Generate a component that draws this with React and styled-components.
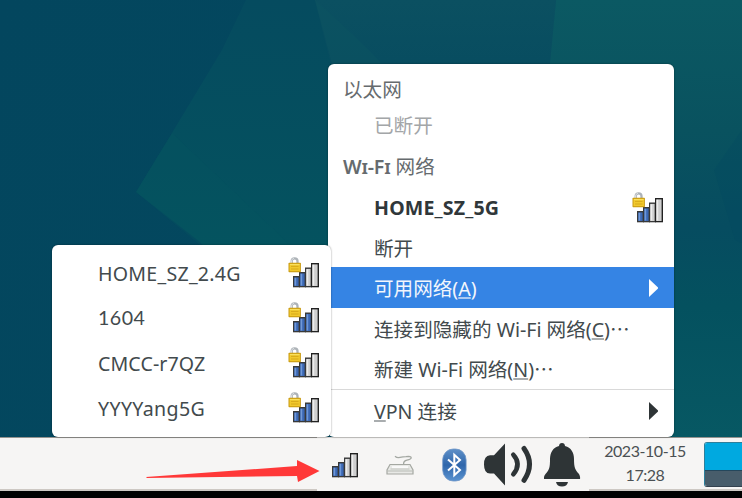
import React from 'react';
import styled, { createGlobalStyle } from 'styled-components';

const Global = createGlobalStyle`
  * { box-sizing: border-box; }
  body { margin: 0; overflow: hidden; }
  svg { display: block; flex: none; }
`;

const Desktop = styled.div`
  position: relative;
  display: flex;
  flex-direction: column;
  width: 742px;
  height: 498px;
  background: #000;
  overflow: hidden;
  font-family: 'Noto Sans', 'Noto Sans CJK SC', sans-serif;
  font-size: 19.6px;
  color: #3d4649;
`;

const Wallpaper = styled.svg`
  width: 742px;
  height: 437px;
`;

const Menu = styled.div`
  position: absolute;
  left: 328px;
  top: 64px;
  width: 346px;
  height: 373px;
  padding-top: 8px;
  background: #fff;
  border-radius: 6px;
  box-shadow: 0 0 2px rgba(0, 0, 0, 0.45);
`;

const Submenu = styled(Menu)`
  left: 52px;
  top: 245px;
  width: 279px;
  height: 192px;
  padding: 5px 1px 0 0;
`;

const Row = styled.div`
  display: flex;
  align-items: center;
  justify-content: space-between;
  height: ${(p) => p.$h}px;
  padding: 0 11px 0 ${(p) => (p.$header ? 15 : 46)}px;
  line-height: 26px;
  white-space: pre;
  font-weight: ${(p) => (p.$bold ? 700 : 400)};
  font-variant-caps: ${(p) => (p.$header ? 'small-caps' : 'normal')};
  color: ${(p) => (p.$active ? '#f2f6fc' : p.$muted ? '#a3a6a8' : p.$header ? '#666b6e' : p.$bold ? '#30373a' : '#424a4d')};
  background: ${(p) => (p.$active ? '#3584e4' : 'transparent')};
`;

const Label = styled.span`
  position: relative;
  top: ${(p) => p.$dy || 0}px;
  letter-spacing: ${(p) => p.$ls || 0}px;
  font-family: ${(p) => p.$font || 'inherit'};
  font-weight: ${(p) => p.$weight || 'inherit'};
`;

const Key = styled.span`
  text-decoration: underline;
  text-decoration-thickness: 2px;
  text-decoration-color: ${(p) => (p.$light ? '#a9c9f3' : '#a9adaf')};
  text-underline-offset: 1px;
  text-decoration-skip-ink: none;
`;

const Separator = styled.div`
  height: 1px;
  background: #d9d9d9;
`;

const ArrowSlot = styled.span`
  display: flex;
  margin-right: 4px;
`;

const Panel = styled.div`
  display: flex;
  height: 54px;
  background: #f6f5f4;
`;

const PanelSection = styled.div`
  width: ${(p) => p.$w}px;
  border-top: 1px solid #94938f;
  border-bottom: 2px solid #cdc8c3;
`;

const Tray = styled.div`
  display: flex;
  align-items: center;
  width: 272px;
  border-top: 1px solid #d4d3d1;
  padding-left: 15px;
`;

const TrayItem = styled.div`
  display: flex;
  width: ${(p) => p.$w}px;
  padding-top: ${(p) => p.$drop || 0}px;
`;

const RightSection = styled(PanelSection)`
  display: flex;
`;

const Clock = styled.div`
  display: flex;
  flex: none;
  flex-direction: column;
  align-items: center;
  width: 112px;
  font-family: Lato, 'Noto Sans', sans-serif;
  font-size: 16px;
  letter-spacing: -0.45px;
  line-height: 24px;
  padding-top: 1px;
  color: #4b5053;
`;

const Pager = styled.div`
  display: flex;
  flex: none;
  flex-direction: column;
  width: 44px;
  height: 45px;
  margin: 4px 0 0 3px;
  border: 1px solid #2d7f9b;
  border-bottom-color: #34424f;
  border-radius: 3px;
  overflow: hidden;
`;

const PagerCell = styled.div`
  flex: ${(p) => p.$grow};
  background: ${(p) => p.$color};
  border-top: ${(p) => (p.$line ? '1px solid #24475c' : 'none')};
`;

const Pointer = styled.svg`
  position: absolute;
  left: 146px;
  top: 459px;
`;

function Bars({ level }) {
  const bars = [
    [0, 13, 7],
    [6, 9, 7],
    [12, 4.5, 7],
    [18, 0, 8],
  ];
  return bars.map(([x, y, w], i) => {
    const on = i < level;
    return (
      <g key={x}>
        <rect x={x} y={y} width={w} height={24.3 - y} fill={i === 3 ? '#222' : '#383939'} />
        <rect x={x + 1.2} y={y + 1.4} width={w - 2.6} height={21.6 - y} fill={on ? '#3b68b4' : '#cfcfcf'} />
        <rect x={x + 1.6} y={y + 1.8} width="1.6" height={20.8 - y} fill={on ? '#6f98d8' : '#ededed'} />
      </g>
    );
  });
}

function SecureSignal({ level }) {
  return (
    <svg width="31" height="31" viewBox="0 0 31 31">
      <g transform="translate(5 6)"><Bars level={level} /></g>
      <path d="M3.7 7V4.1Q3.7 1.3 6.6 1.3T9.5 4.1V7" fill="none" stroke="#adb3b8" strokeWidth="2.3" />
      <path d="M3.5 7V4Q3.8 1.7 6 1.3" fill="none" stroke="#dde0e3" strokeWidth="1" />
      <rect x="0.5" y="5.8" width="12.4" height="9.4" rx="0.7" fill="#c99a12" />
      <rect x="1.5" y="6.8" width="10.4" height="7.4" fill="#f1c92c" />
      <path d="M3 9.4H10.6M3 12H10.6" stroke="#d5a51a" strokeWidth="0.9" />
      <path d="M2 7.6H11.6" stroke="#fbe46d" strokeWidth="0.9" />
    </svg>
  );
}

function Signal() {
  return (
    <svg width="27" height="25" viewBox="0 0 27 25"><Bars level={2} /></svg>
  );
}

function Triangle({ color }) {
  return (
    <ArrowSlot>
      <svg width="11" height="18" viewBox="0 0 11 18"><path d="M1 0L10 8.5V9.5L1 18Z" fill={color} /></svg>
    </ArrowSlot>
  );
}

function Keyboard() {
  return (
    <svg width="28" height="20" viewBox="0 0 28 20">
      <path d="M9 1.2Q11 3 14 2.4T20 1.7Q25.5 1 25.2 3Q25 4.3 21 5.2Q17.5 6 17.6 9" fill="none" stroke="#a4a8a2" strokeWidth="1.3" />
      <path d="M4 9.5H24L27 15V19H1V15Z" fill="#e8e9e6" stroke="#a5a8a2" strokeWidth="1.2" />
      <path d="M6 12.2H22" stroke="#fafafa" strokeWidth="2.2" />
      <path d="M4.5 14H23.5" stroke="#c0c3bd" strokeWidth="1" />
      <path d="M1 16H27" stroke="#b7bab4" strokeWidth="1" />
    </svg>
  );
}

function Bluetooth() {
  return (
    <svg width="25" height="34" viewBox="0 0 25 34">
      <defs>
        <linearGradient id="bt" x1="0" y1="0" x2="0" y2="1">
          <stop offset="0" stopColor="#5e90c8" />
          <stop offset="0.5" stopColor="#2f66ab" />
          <stop offset="1" stopColor="#5a93d0" />
        </linearGradient>
      </defs>
      <rect x="0.7" y="1" width="23.4" height="32" rx="10.5" ry="11" fill="url(#bt)" stroke="#6f96c6" strokeWidth="0.8" />
      <path d="M6 11.5L18 22L12.3 27.2V6.8L18 12L6 22.5" fill="none" stroke="#fff" strokeWidth="2" />
    </svg>
  );
}

function Speaker() {
  return (
    <svg width="49" height="43" viewBox="0 0 49 43">
      <path d="M21 0.5V42.5L10 30.5H6Q0 30.5 0 21.5T6 12.3H10Z" fill="#2e3436" />
      <path d="M29.3 11.7Q37.8 21 29.3 31.3" fill="none" stroke="#2e3436" strokeWidth="4.6" strokeLinecap="round" />
      <path d="M40 5.5Q51 21 40 37.3" fill="none" stroke="#2e3436" strokeWidth="5" strokeLinecap="round" />
    </svg>
  );
}

function Bell() {
  return (
    <svg width="37" height="44" viewBox="0 0 37 44">
      <path d="M15 3Q15.2 0 18 0T21 3C27 4.5 30 9.5 30 16C30 24 31 27 35 31Q36.5 33.5 36 36H0Q-0.4 33 1.5 31C5.5 27 6 24 6 16C6 9.5 9 4.5 15 3Z" fill="#2e3436" />
      <path d="M12 39H24Q23 43.6 18 43.6T12 39Z" fill="#2e3436" />
    </svg>
  );
}

const networks = [
  { name: 'HOME_SZ_2.4G', level: 2, dy: 1, ls: 0.25 },
  { name: '1604', level: 3, dy: 0, font: 'Lato', ls: 0.5 },
  { name: 'CMCC-r7QZ', level: 2, dy: 1, ls: 0.1 },
  { name: 'YYYYang5G', level: 3, dy: 1, ls: 0.35 },
];

export default function App() {
  return (
    <>
      <Global />
      <Desktop>
        <Wallpaper viewBox="0 0 742 437">
          <defs>
            <linearGradient id="base" x1="0" y1="0" x2="1" y2="0.3">
              <stop offset="0" stopColor="#03465e" />
              <stop offset="1" stopColor="#04495f" />
            </linearGradient>
            <linearGradient id="facet" x1="0" y1="0" x2="0" y2="1">
              <stop offset="0" stopColor="#054b5f" />
              <stop offset="1" stopColor="#04545f" />
            </linearGradient>
            <linearGradient id="top" x1="0" y1="0" x2="0" y2="1">
              <stop offset="0" stopColor="#0b5061" />
              <stop offset="1" stopColor="#074c60" />
            </linearGradient>
            <linearGradient id="right" x1="0" y1="0" x2="0" y2="1">
              <stop offset="0" stopColor="#0b5963" />
              <stop offset="0.3" stopColor="#09525f" />
              <stop offset="0.52" stopColor="#064c60" />
              <stop offset="0.7" stopColor="#04515f" />
              <stop offset="1" stopColor="#075863" />
            </linearGradient>
          </defs>
          <rect width="742" height="437" fill="url(#base)" />
          <path d="M246 0H400V300H250L200 242L136 192L172 133L222 50Z" fill="url(#facet)" />
          <path d="M172 133L290 245H200L136 192Z" fill="#06565f" opacity="0.3" />
          <path d="M315 0H556L550 80H335Z" fill="url(#top)" />
          <path d="M315 0Q360 40 382 64H332Z" fill="#0c5461" opacity="0.6" />
          <path d="M556 0H742V437H550V64Z" fill="url(#right)" />
          <path d="M742 130L714 170L735 240L742 243Z" fill="#044a61" opacity="0.3" />
        </Wallpaper>

        <Panel>
          <PanelSection $w={317} />
          <Tray>
            <TrayItem $w={54} $drop={2}><Signal /></TrayItem>
            <TrayItem $w={56}><Keyboard /></TrayItem>
            <TrayItem $w={42}><Bluetooth /></TrayItem>
            <TrayItem $w={60}><Speaker /></TrayItem>
            <TrayItem $w={37}><Bell /></TrayItem>
          </Tray>
          <RightSection $w={153}>
            <Clock>
              <span>2023-10-15</span>
              <span>17:28</span>
            </Clock>
            <Pager>
              <PagerCell $grow={28} $color="#00a9e0" />
              <PagerCell $grow={15} $color="#485d6b" $line />
            </Pager>
          </RightSection>
        </Panel>

        <Menu>
          <Row $h={36} $header><Label>以太网</Label></Row>
          <Row $h={36} $muted><Label>已断开</Label></Row>
          <Row $h={43} $header><Label $dy={1}><Label $weight={600} $ls={-0.2}>Wi-Fi</Label> 网络</Label></Row>
          <Row $h={40} $bold><Label $dy={1} $ls={0.15}>HOME_SZ_5G</Label><SecureSignal level={2} /></Row>
          <Row $h={40}><Label $dy={2}>断开</Label></Row>
          <Row $h={41} $active><Label $dy={1}>可用网络(<Key $light>A</Key>)</Label><Triangle color="#fff" /></Row>
          <Row $h={41}><Label $dy={1}>连接到隐藏的 Wi-Fi 网络(<Key>C</Key>)⋯</Label></Row>
          <Row $h={40}><Label $dy={1}>新建 Wi-Fi 网络(<Key>N</Key>)⋯</Label></Row>
          <Separator />
          <Row $h={41}><Label $dy={1}><Key>V</Key>PN 连接</Label><Triangle color="#2e3436" /></Row>
        </Menu>

        <Submenu>
          {networks.map((n) => (
            <Row key={n.name} $h={45}>
              <Label $dy={n.dy} $font={n.font} $ls={n.ls}>{n.name}</Label>
              <SecureSignal level={n.level} />
            </Row>
          ))}
        </Submenu>

        <Pointer width="174" height="24" viewBox="0 0 174 24">
          <path d="M0 18L151 7V1L173.5 12L152 23L151 17L1 19Z" fill="#ff3838" />
        </Pointer>
      </Desktop>
    </>
  );
}
